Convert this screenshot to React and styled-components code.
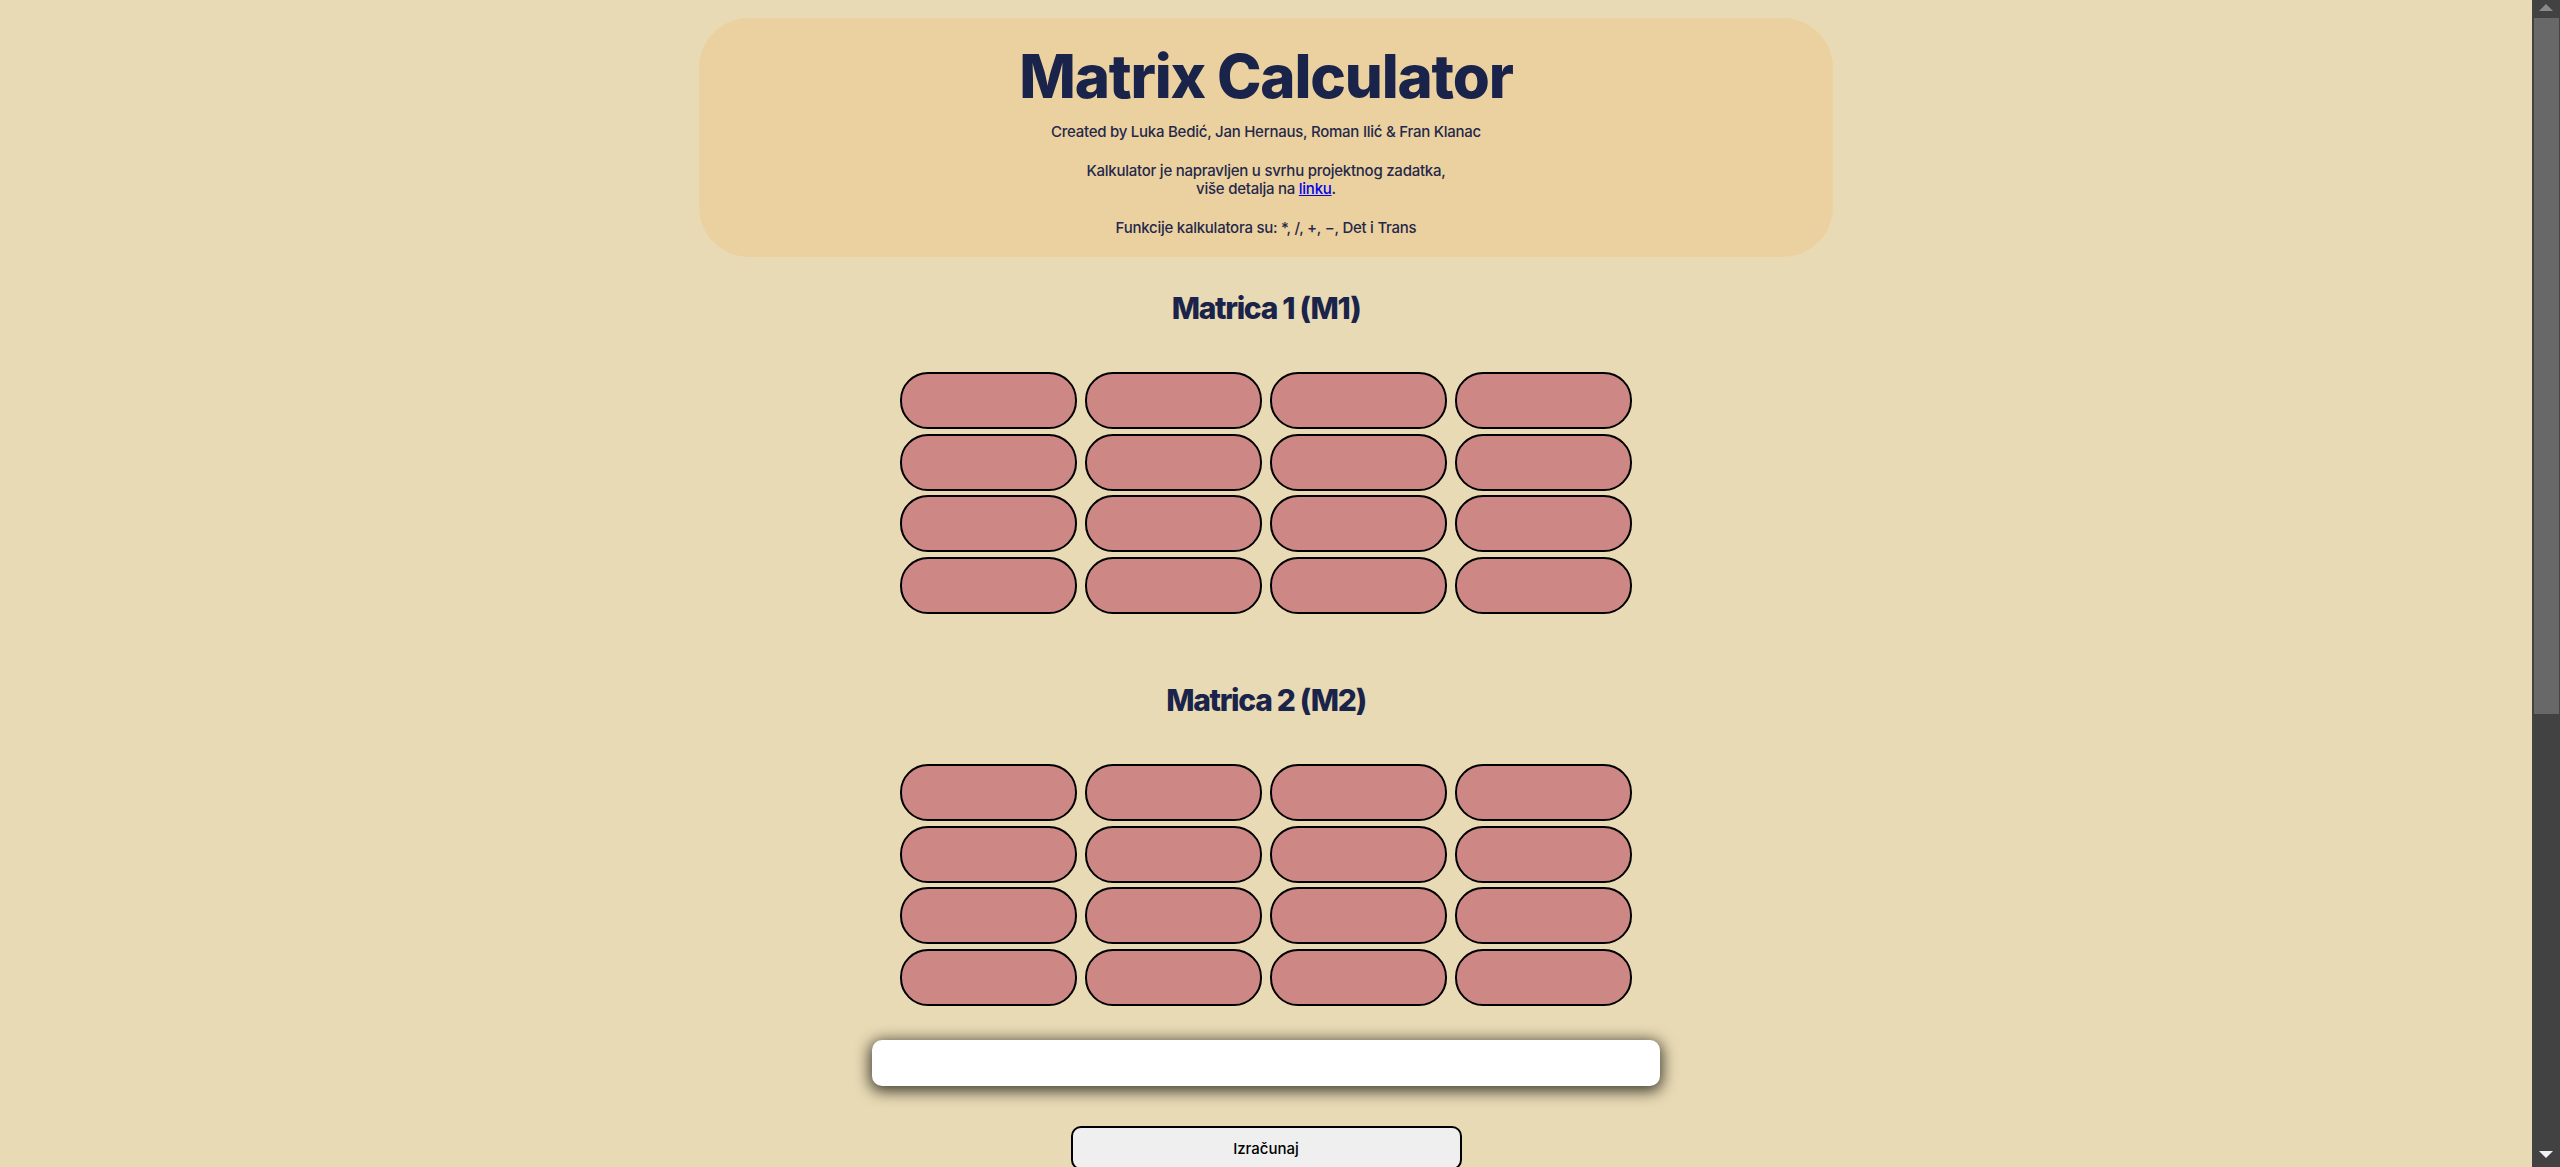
import styled, { createGlobalStyle } from 'styled-components';

const GlobalStyle = createGlobalStyle`
  html {
    background: #e8dab4;
  }
  body {
    margin: 0;
    background: #e8dab4;
    color: #1b2449;
    font-family: Inter, "Noto Sans", sans-serif;
  }
`;

function Matrix({ title }) {
  const cells = Array.from({ length: 16 }, (_, i) => i);
  return (
    <Section>
      <MatrixTitle>{title}</MatrixTitle>
      <Grid>
        {cells.map((i) => (
          <Cell key={i} type="text" />
        ))}
      </Grid>
    </Section>
  );
}

// dark scrollbar as it shows in the screenshot
function Scrollbar() {
  return (
    <Track>
      <Arrow up />
      <Thumb />
      <Arrow />
    </Track>
  );
}

function App() {
  return (
    <Page>
      <GlobalStyle />
      <Header>
        <Title>Matrix Calculator</Title>
        <Info>Created by Luka Bedić, Jan Hernaus, Roman Ilić &amp; Fran Klanac</Info>
        <Info>
          Kalkulator je napravljen u svrhu projektnog zadatka,
          <br />
          više detalja na <Link href="#">linku</Link>.
        </Info>
        <Info>Funkcije kalkulatora su: *, /, +, −, Det i Trans</Info>
      </Header>
      <Matrix title="Matrica 1 (M1)" />
      <Spacer />
      <Matrix title="Matrica 2 (M2)" />
      <Result readOnly />
      <Button>Izračunaj</Button>
      <Scrollbar />
    </Page>
  );
}

const Page = styled.div`
  display: flex;
  flex-direction: column;
  align-items: center;
  padding: 18px 28px 740px 0;
`;

const Header = styled.header`
  display: flex;
  flex-direction: column;
  align-items: center;
  gap: 21px;
  box-sizing: border-box;
  width: 1134px;
  height: 239px;
  padding: 23px 0 19px;
  border-radius: 50px;
  background: #ebd1a0;
  text-align: center;
`;

const Title = styled.h1`
  margin: 0 0 -9px;
  font-size: 60px;
  line-height: 70px;
  font-weight: 800;
  letter-spacing: -1.2px;
  color: #1a2349;
`;

const Info = styled.p`
  margin: 0;
  font-size: 15px;
  line-height: 18px;
  font-weight: 500;
  letter-spacing: -0.25px;
  color: #25284a;
`;

const Link = styled.a`
  color: #0000ee;
  text-decoration: underline;
`;

const Section = styled.section`
  display: flex;
  flex-direction: column;
  align-items: center;
  margin-top: 32px;
`;

const MatrixTitle = styled.h2`
  margin: 0 0 45px;
  font-size: 30px;
  line-height: 38px;
  font-weight: 800;
  letter-spacing: -1.3px;
  color: #1a2349;
`;

const Grid = styled.div`
  display: grid;
  grid-template-columns: repeat(4, 177px);
  column-gap: 8px;
  row-gap: 4.7px;
`;

const Cell = styled.input`
  box-sizing: border-box;
  width: 177px;
  height: 57px;
  margin: 0;
  padding: 0 16px;
  border: 2px solid #000;
  border-radius: 28px;
  background: #cd8886;
  color: #000;
  font-family: inherit;
  font-size: 16px;
  outline: none;
`;

const Spacer = styled.div`
  height: 35px;
`;

const Result = styled.textarea`
  box-sizing: border-box;
  width: 788px;
  height: 46px;
  margin-top: 34px;
  padding: 8px 12px;
  border: none;
  border-radius: 10px;
  background: #fff;
  color: #000;
  resize: none;
  outline: none;
  box-shadow: 0 3px 15px 2px rgba(0, 0, 0, 0.75);
`;

const Button = styled.button`
  box-sizing: border-box;
  width: 391px;
  height: 44px;
  margin-top: 40px;
  border: 2px solid #000;
  border-radius: 10px;
  background: #efefef;
  color: #000;
  font-family: inherit;
  font-size: 15px;
  font-weight: 500;
  cursor: pointer;
`;

const Track = styled.div`
  position: fixed;
  top: 0;
  right: 0;
  display: flex;
  flex-direction: column;
  align-items: center;
  width: 28px;
  height: 100vh;
  background: #424242;
`;

const Arrow = styled.div`
  flex: none;
  width: 0;
  height: 0;
  margin: ${(p) => (p.up ? '4px 0 7px' : 'auto 0 9px')};
  border-left: 7px solid transparent;
  border-right: 7px solid transparent;
  ${(p) =>
    p.up
      ? 'border-bottom: 7px solid #8a8a8a;'
      : 'border-top: 7px solid #f2f2f2;'}
`;

const Thumb = styled.div`
  flex: none;
  align-self: stretch;
  height: 696px;
  margin: 0 1px 0 2px;
  background: #686868;
`;

export default App;
